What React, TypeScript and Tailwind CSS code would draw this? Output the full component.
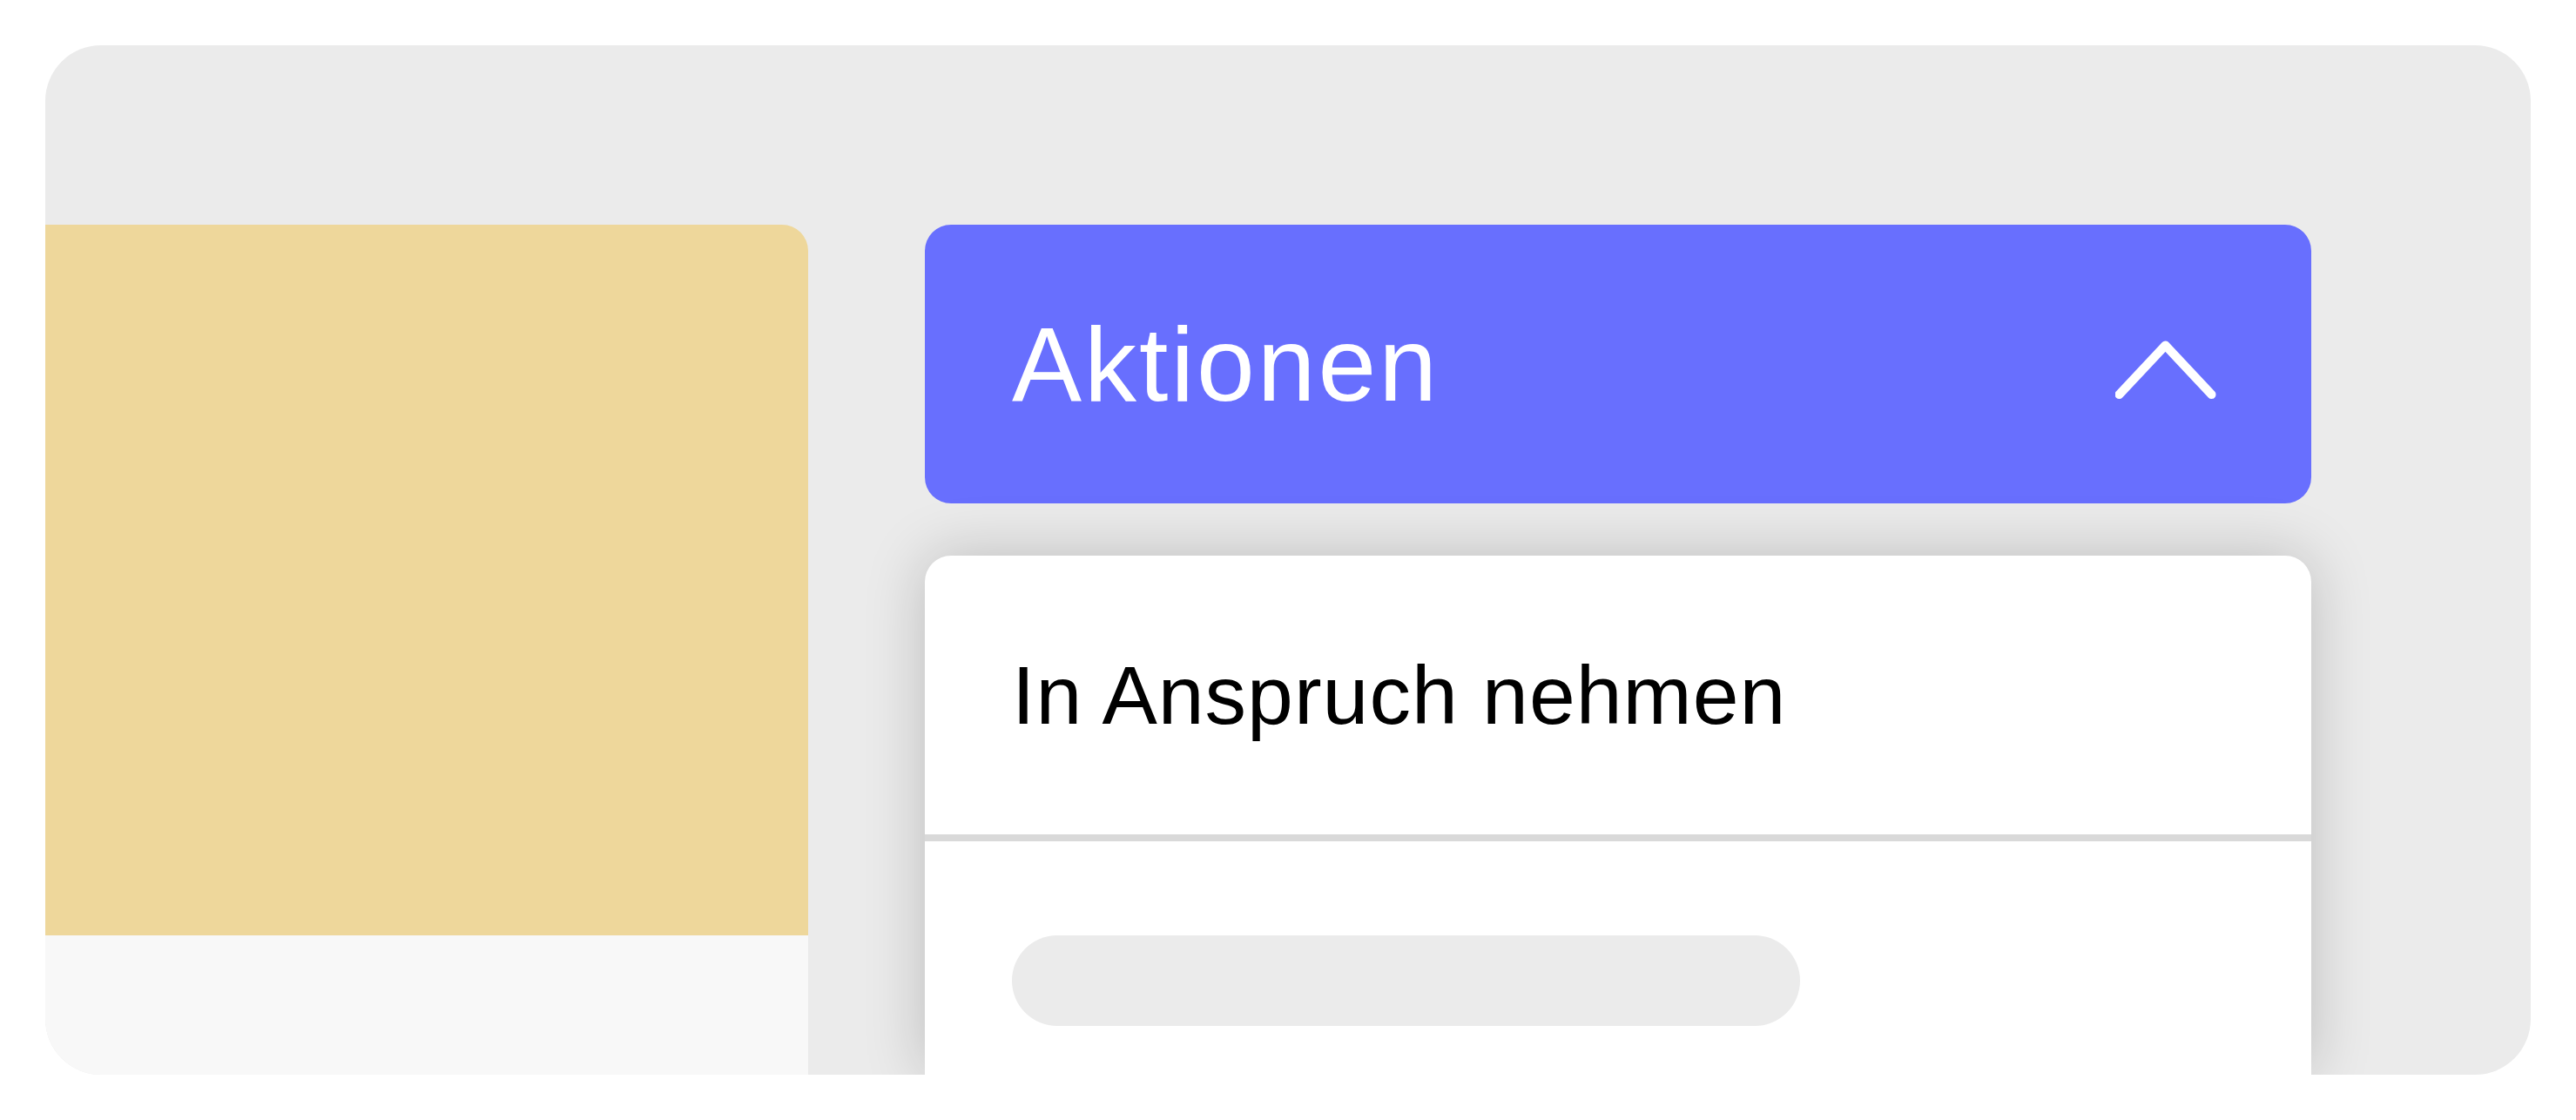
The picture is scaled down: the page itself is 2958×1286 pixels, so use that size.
import React from 'react';

const font = { fontFamily: '"Liberation Sans", Arial, sans-serif' };

function ChevronUp() {
  return (
    <svg width="116" height="68" viewBox="0 0 116 68" fill="none" className="mt-[14px]">
      <polyline
        points="4.5,62 57.5,5.5 110.5,62"
        stroke="white"
        strokeWidth="10"
        strokeLinecap="round"
        strokeLinejoin="round"
      />
    </svg>
  );
}

export default function App() {
  return (
    <div className="min-h-[1286px] w-full bg-white p-[52px]" style={font}>
      <div className="flex h-[1182px] w-[2854px] overflow-hidden rounded-[64px] bg-[#ebebeb] pt-[206px]">
        {/* left preview panel */}
        <div className="flex w-[876px] shrink-0 flex-col overflow-hidden rounded-tr-[30px]">
          <div className="h-[816px] bg-[#eed79b]" />
          <div className="flex-1 bg-[#f8f8f8]" />
        </div>

        {/* actions dropdown */}
        <div className="ml-[134px] flex w-[1592px] shrink-0 flex-col gap-[60px]">
          <button
            type="button"
            className="flex h-[320px] items-center justify-between rounded-[30px] bg-[#686ffe] pl-[100px] pr-[109px] text-white"
          >
            <span className="text-[120px] leading-none tracking-[3px]">Aktionen</span>
            <ChevronUp />
          </button>

          <div className="flex-1 rounded-t-[30px] bg-white shadow-[0_0_70px_rgba(0,0,0,0.2)]">
            <div className="flex h-[320px] items-center pl-[100px]">
              <span className="text-[95px] leading-none tracking-[1px] text-black">In Anspruch nehmen</span>
            </div>
            <div className="h-[8px] bg-[#d9d9d9]" />
            <div className="pl-[100px] pt-[108px]">
              <div className="h-[104px] w-[905px] rounded-full bg-[#ebebeb]" />
            </div>
          </div>
        </div>
      </div>
    </div>
  );
}
